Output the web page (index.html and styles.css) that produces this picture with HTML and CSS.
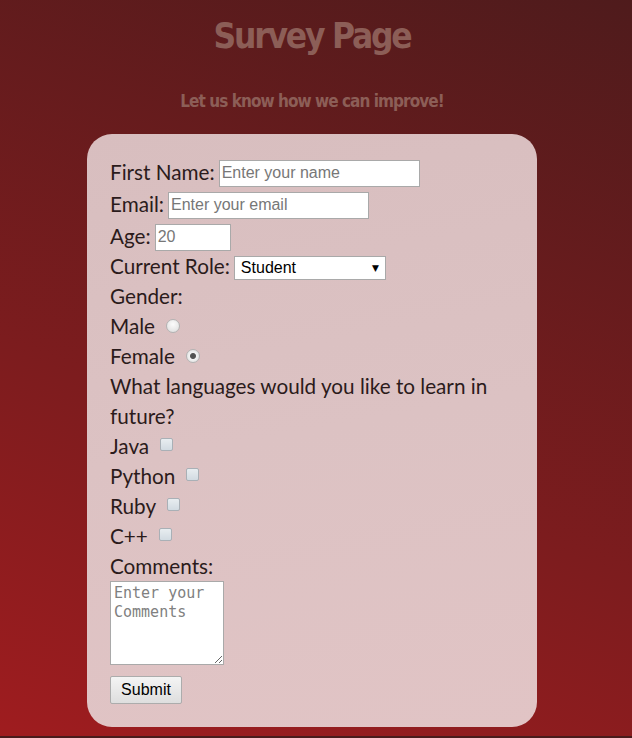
FILE: index.html
```html
<!DOCTYPE html>
<html>
<head>
<meta charset="utf-8">
<title>Survey Page</title>
<link rel="stylesheet" href="styles.css">
</head>
<body>
<main class="page">
  <h1 class="title">Survey Page</h1>
  <p class="subtitle">Let us know how we can improve!</p>
  <form class="card">
    <div class="row row-input"><label class="lbl">First Name:</label><input class="text w200" type="text" placeholder="Enter your name"></div>
    <div class="row row-input"><label class="lbl">Email:</label><input class="text w200" type="email" placeholder="Enter your email"></div>
    <div class="row row-input"><label class="lbl">Age:</label><input class="text w75" type="number" placeholder="20"></div>
    <div class="row row-select"><label class="lbl">Current Role:</label><span class="select-wrap"><select class="select"><option>Student</option><option>Full Time Job</option><option>Other</option></select></span></div>
    <div class="row"><span class="lbl">Gender:</span></div>
    <div class="row"><label class="lbl">Male</label><input class="radio" type="radio" name="gender"></div>
    <div class="row"><label class="lbl">Female</label><input class="radio" type="radio" name="gender" checked></div>
    <div class="row para">What languages would you like to learn in future?</div>
    <div class="row"><label class="lbl">Java</label><input class="check" type="checkbox"></div>
    <div class="row"><label class="lbl">Python</label><input class="check" type="checkbox"></div>
    <div class="row"><label class="lbl">Ruby</label><input class="check" type="checkbox"></div>
    <div class="row"><label class="lbl">C++</label><input class="check" type="checkbox"></div>
    <div class="row"><span class="lbl">Comments:</span></div>
    <textarea class="comments" placeholder="Enter your Comments"></textarea>
    <div class="actions"><button class="submit" type="button">Submit</button></div>
  </form>
</main>
</body>
</html>
```

FILE: styles.css
```css
html {
  background: #4a1a1b;
}
body {
  margin: 0;
  height: 736px;
  overflow: hidden;
  background: linear-gradient(20deg, #9f1c1f 0%, #7d1c1e 40%, #4f1b1c 100%);
}
.page {
  padding: 0 8px 0 0;
  display: flex;
  flex-direction: column;
  align-items: center;
}
.title {
  margin: 14px 0 0;
  font-family: "DejaVu Sans Condensed", "DejaVu Sans", sans-serif;
  font-weight: bold;
  font-size: 35px;
  line-height: 44px;
  letter-spacing: -2.2px;
  color: #8c5e57;
}
.subtitle {
  margin: 31px 0 0;
  font-family: "DejaVu Sans Condensed", "DejaVu Sans", sans-serif;
  font-weight: bold;
  font-size: 17px;
  line-height: 24px;
  letter-spacing: -0.95px;
  color: #8c5e57;
}
.card {
  margin-top: 21px;
  width: 450px;
  box-sizing: border-box;
  padding: 23px 23px 23px 23px;
  border-radius: 25px;
  background: linear-gradient(170deg, #d8bebf 0%, #dcc2c3 50%, #e1c4c5 100%);
  font-family: Lato, "Open Sans", sans-serif;
  font-size: 20.7px;
  color: #2b1b1b;
  display: flex;
  flex-direction: column;
}
.row {
  display: flex;
  align-items: center;
  height: 30px;
  line-height: 30px;
}
.row-input {
  height: 32px;
}
.row-select {
  height: 29px;
}
.lbl {
  margin-right: 4px;
  margin-bottom: 3px;
}
.text {
  box-sizing: border-box;
  height: 27px;
  border: 1px solid #a9a9a9;
  background: #fff;
  padding: 1px 2px;
  font-family: "Liberation Sans", Arial, sans-serif;
  font-size: 16px;
  color: #222;
  margin: 0;
}
.text::placeholder {
  color: #777;
}
.w200 { width: 201px; }
.w75 { width: 76px; }
.select-wrap {
  position: relative;
  display: inline-block;
  height: 24px;
}
.select-wrap::after {
  content: "▼";
  position: absolute;
  right: 7px;
  top: 6px;
  font-size: 9px;
  line-height: 12px;
  color: #000;
  pointer-events: none;
  font-family: "DejaVu Sans", sans-serif;
}
.select {
  appearance: none;
  -webkit-appearance: none;
  box-sizing: border-box;
  width: 152px;
  height: 24px;
  border: 1px solid #a9a9a9;
  border-radius: 0;
  background: #fff;
  padding: 0 6px;
  font-family: "Liberation Sans", Arial, sans-serif;
  font-size: 16px;
  color: #000;
  margin: 0;
  display: block;
}
.radio {
  appearance: none;
  -webkit-appearance: none;
  width: 14px;
  height: 14px;
  margin: 0 0 3px 7px;
  border-radius: 50%;
  border: 1px solid #b3b3b3;
  background: radial-gradient(circle at 50% 35%, #fbfbfb, #dcdcdc);
  box-sizing: border-box;
}
.radio:checked {
  background: radial-gradient(circle, #505050 0, #555 2.5px, #f2f2f2 3.5px, #dcdcdc 100%);
}
.check {
  appearance: none;
  -webkit-appearance: none;
  width: 13px;
  height: 13px;
  margin: 0 0 6px 7px;
  border: 1px solid #a9b0b6;
  border-radius: 2px;
  background: linear-gradient(#e8edf0, #d2dbe2);
  box-sizing: border-box;
}
.para {
  height: auto;
  display: block;
  margin: -1px 0 1px;
}
.comments {
  box-sizing: border-box;
  width: 114px;
  height: 84px;
  margin: -1px 0 0;
  border: 1px solid #a9a9a9;
  padding: 2px 3px;
  background: #fff;
  font-family: "DejaVu Sans Mono", "Liberation Mono", monospace;
  font-size: 15px;
  line-height: 19px;
  resize: vertical;
}
.comments::placeholder {
  color: #808080;
}
.actions {
  margin-top: 11px;
  display: flex;
}
.submit {
  box-sizing: border-box;
  width: 72px;
  height: 28px;
  border: 1px solid #acacac;
  border-radius: 2px;
  background: linear-gradient(#f4f4f4, #dedede);
  font-family: "Liberation Sans", Arial, sans-serif;
  font-size: 16px;
  color: #000;
  padding: 0;
}
```
